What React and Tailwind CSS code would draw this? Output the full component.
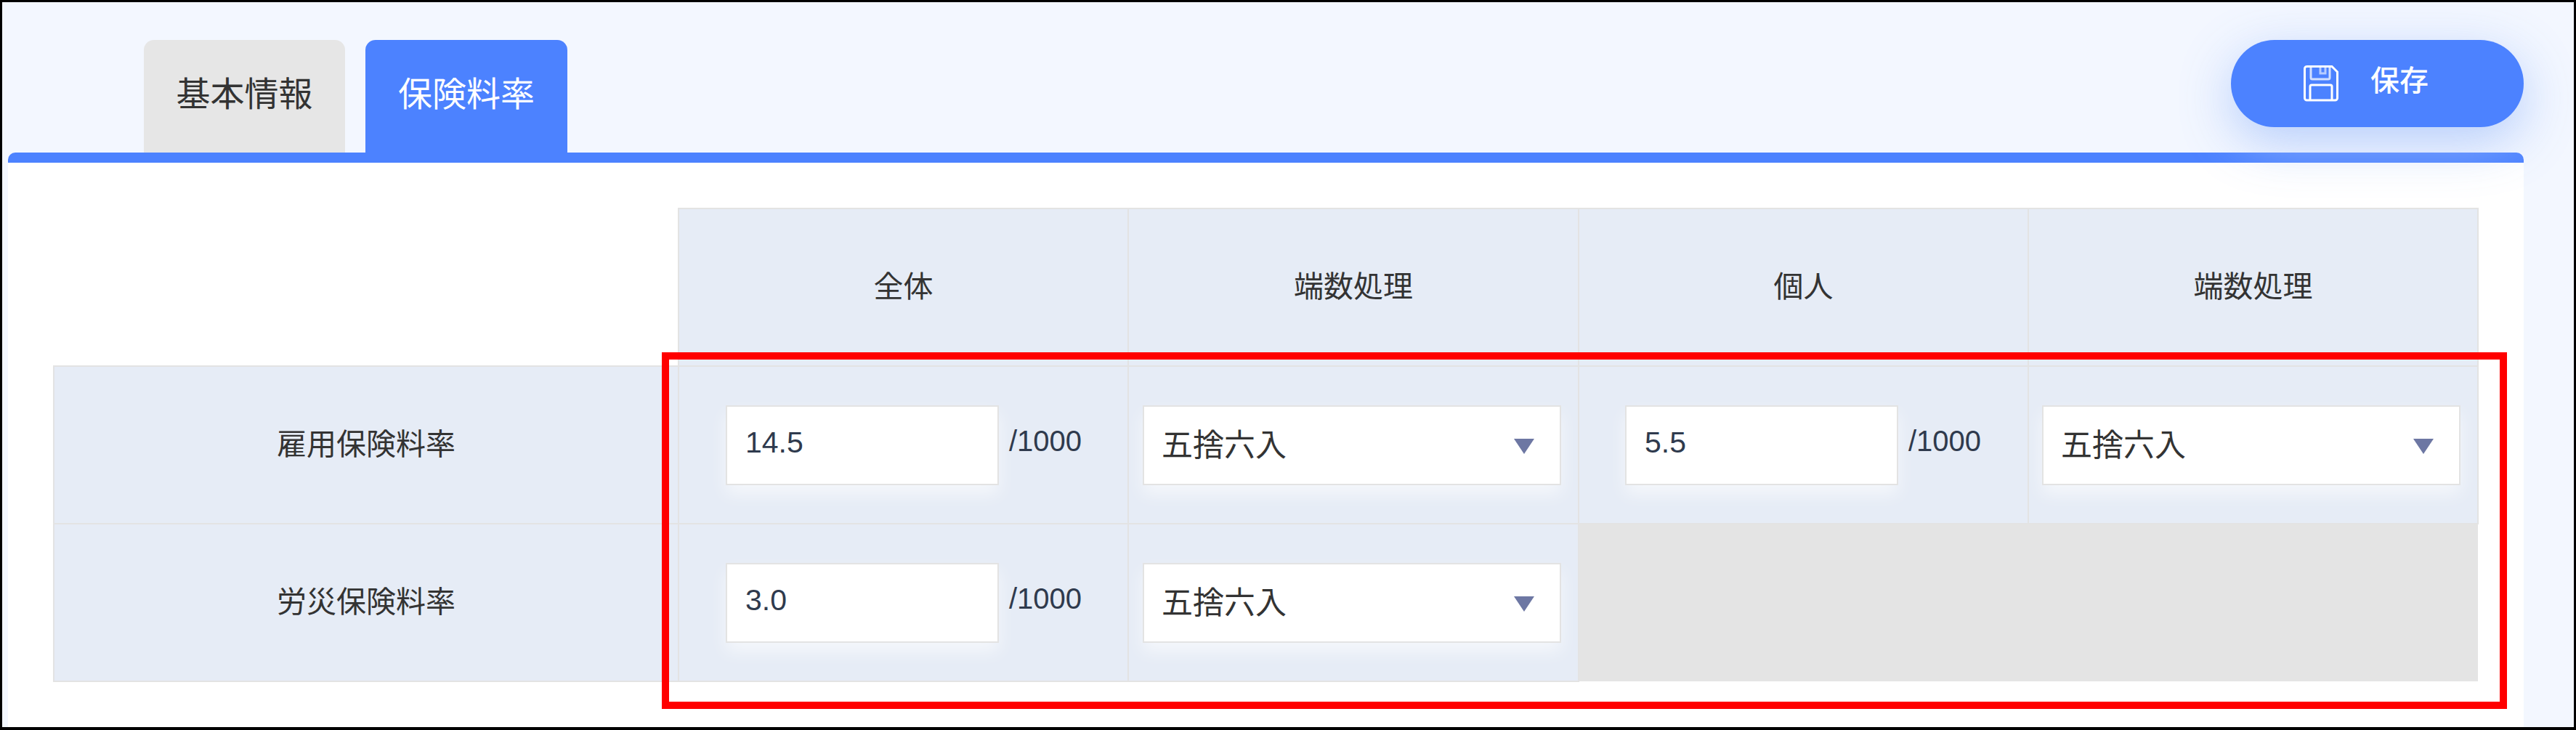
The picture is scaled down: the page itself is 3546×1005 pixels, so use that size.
import React from "react";

const latin = "font-['Liberation_Sans','Noto_Sans_CJK_JP',sans-serif]";

const SaveIcon = () => (
  <svg width="48" height="50" viewBox="0 0 48 50" fill="none" stroke="#fff" strokeWidth="3">
    <path d="M4 1.500H39L46.500 9V45a3 3 0 0 1-3 3H4.500a3 3 0 0 1-3-3V4.500a3 3 0 0 1 3-3Z" />
    <path d="M10 2V17a2 2 0 0 0 2 2H34a2 2 0 0 0 2-2V2" strokeOpacity="0.75" />
    <path d="M23 3V11H30V3" strokeOpacity="0.6" />
    <path d="M9 48V29a2 2 0 0 1 2-2H37a2 2 0 0 1 2 2V48" />
  </svg>
);

const NumberField = ({ value }) => (
  <div className="flex items-center">
    <div className="flex h-[110px] w-[376px] items-start border-2 border-[#e3e3e3] bg-white pl-[25px] pt-[21px] text-[41px] leading-[56px] text-[#2f3a4d] shadow-[0_12px_22px_rgba(255,255,255,0.6)]">
      {value}
    </div>
    <span className="ml-[14px] -mt-[12px] text-[40px] text-[#2f3a4d]">/1000</span>
  </div>
);

const RoundingSelect = () => (
  <div className="flex h-[110px] w-[576px] items-start justify-between border-2 border-[#e3e3e3] bg-white pl-[24px] pr-[35px] pt-[25px] text-[43px] leading-[56px] text-[#333333] shadow-[0_12px_22px_rgba(255,255,255,0.6)]">
    <span>五捨六入</span>
    <svg className="mt-[19px]" width="28" height="21" viewBox="0 0 28 21">
      <path d="M0 0H28L14 21Z" fill="#6d77a3" />
    </svg>
  </div>
);

const thClass = "h-[217px] border-2 border-[#e3e3e3] bg-[#e6ecf6] text-center align-middle text-[41px] font-normal text-[#333333]";
const tdClass = "h-[217px] border-2 border-[#e3e3e3] bg-[#e6ecf6] align-middle";

const App = () => {
  return (
    <div className={`relative h-[1005px] w-[3546px] overflow-hidden border-[3px] border-b-[4px] border-black bg-[#f3f7ff] pl-[8px] pr-[69px] ${latin}`}>
      <div className="flex h-[207px] items-end justify-between">
        <div className="flex gap-[28px] pl-[187px]">
          <div className="flex h-[155px] w-[277px] items-center justify-center rounded-t-[14px] bg-[#e6e6e6] pb-[4px] text-[47px] text-[#333333]">
            基本情報
          </div>
          <div className="flex h-[155px] w-[278px] items-center justify-center rounded-t-[14px] bg-[#4c82ff] pb-[4px] text-[47px] text-white">
            保険料率
          </div>
        </div>
        <button className="relative z-10 mb-[35px] flex h-[120px] w-[403px] items-center gap-[44px] rounded-full bg-[#4c82ff] pl-[100px] text-[40px] font-medium text-white shadow-[0_20px_70px_rgba(170,198,250,0.85)]">
          <SaveIcon />
          <span className="-mt-[8px]">保存</span>
        </button>
      </div>

      <div className="h-[791px] rounded-t-[10px] border-t-[14px] border-[#4c82ff] bg-white p-[62px]">
        <table className="w-[3337px] table-fixed border-collapse">
          <colgroup>
            <col className="w-[860px]" />
            <col className="w-[619px]" />
            <col className="w-[620px]" />
            <col className="w-[619px]" />
            <col className="w-[619px]" />
          </colgroup>
          <thead>
            <tr>
              <th />
              <th className={thClass}>全体</th>
              <th className={thClass}>端数処理</th>
              <th className={thClass}>個人</th>
              <th className={thClass}>端数処理</th>
            </tr>
          </thead>
          <tbody>
            <tr>
              <th className={thClass}>雇用保険料率</th>
              <td className={`${tdClass} pl-[64px]`}><NumberField value="14.5" /></td>
              <td className={`${tdClass} pl-[19px]`}><RoundingSelect /></td>
              <td className={`${tdClass} pl-[63px]`}><NumberField value="5.5" /></td>
              <td className={`${tdClass} pl-[18px]`}><RoundingSelect /></td>
            </tr>
            <tr>
              <th className={thClass}>労災保険料率</th>
              <td className={`${tdClass} pl-[64px]`}><NumberField value="3.0" /></td>
              <td className={`${tdClass} pl-[19px]`}><RoundingSelect /></td>
              <td colSpan={2} className="h-[217px] bg-[#e4e4e4]" />
            </tr>
          </tbody>
        </table>
      </div>

      {/* red annotation frame laid over the table */}
      <div className="absolute left-[908px] top-[482px] h-[491px] w-[2540px] border-[10px] border-[#ff0000]" />
    </div>
  );
};

export default App;
